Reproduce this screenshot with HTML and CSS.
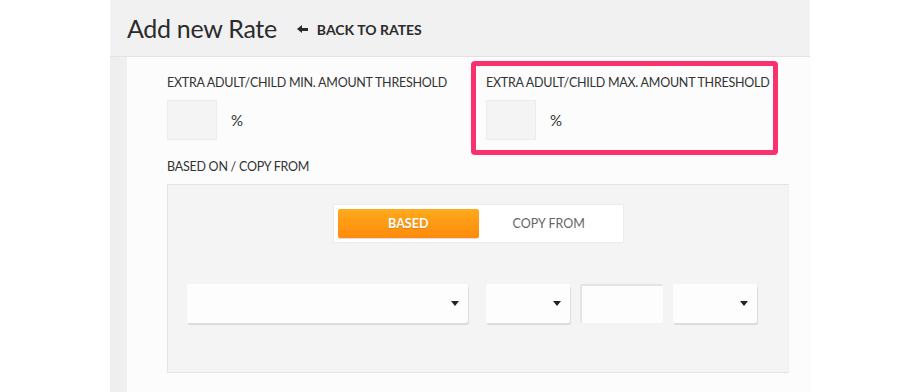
FILE: index.html
```html
<!DOCTYPE html>
<html>

<head>
    <meta charset="utf-8" />
    <title>Add new Rate</title>
    <link rel="stylesheet" href="styles.css">
</head>

<body>
    <div class="page">
        <div class="header">
            <h1>Add new Rate</h1>
            <a class="back-link" href="#"><span class="back-arrow"></span>BACK TO RATES</a>
        </div>
        <div class="main">
            <div class="strip"></div>
            <div class="content">
                <div class="threshold-row">
                    <div class="field">
                        <label>EXTRA ADULT/CHILD MIN. AMOUNT THRESHOLD</label>
                        <div class="percent-input">
                            <input type="text">
                            <span>%</span>
                        </div>
                    </div>
                    <div class="field highlight">
                        <label>EXTRA ADULT/CHILD MAX. AMOUNT THRESHOLD</label>
                        <div class="percent-input">
                            <input type="text">
                            <span>%</span>
                        </div>
                    </div>
                </div>

                <div class="section-title">BASED ON / COPY FROM</div>
                <div class="based-box">
                    <div class="toggle">
                        <button class="toggle-btn active">BASED</button>
                        <button class="toggle-btn">COPY FROM</button>
                    </div>
                    <div class="select-row">
                        <div class="select wide"><span class="caret"></span></div>
                        <div class="select small"><span class="caret"></span></div>
                        <div class="text-box"></div>
                        <div class="select small"><span class="caret"></span></div>
                    </div>
                </div>
            </div>
        </div>
    </div>
</body>

</html>
```

FILE: styles.css
```css
body {
    margin: 0;
    background: #fff;
    font-family: "Lato", "Liberation Sans", sans-serif;
    color: #333;
}

.page {
    margin-left: 110px;
    width: 700px;
    height: 392px;
    display: flex;
    flex-direction: column;
}

.header {
    height: 56px;
    background: #f1f1f1;
    border-bottom: 1px solid #e2e2e2;
    display: flex;
    align-items: center;
    padding-left: 17px;
}

.header h1 {
    margin: 0;
    font-size: 25px;
    letter-spacing: -0.3px;
    font-weight: normal;
    color: #2b2b2b;
}

.back-link {
    margin-left: 20px;
    display: flex;
    align-items: center;
    font-size: 14px;
    font-weight: bold;
    color: #2b2b2b;
    text-decoration: none;
    padding-top: 2px;
}

.back-arrow {
    position: relative;
    width: 7px;
    height: 3px;
    background: #2b2b2b;
    margin-left: 4px;
    margin-right: 9px;
}

.back-arrow::before {
    content: "";
    position: absolute;
    left: -4px;
    top: -3px;
    border-top: 4.5px solid transparent;
    border-bottom: 4.5px solid transparent;
    border-right: 5px solid #2b2b2b;
}

.main {
    flex: 1;
    display: flex;
}

.strip {
    width: 17px;
    background: #efefef;
}

.content {
    flex: 1;
    background: #fcfcfc;
    padding: 4px 0 0 25px;
}

.threshold-row {
    display: flex;
}

.field {
    border: 5px solid transparent;
    padding: 7px 10px 10px;
    width: 299px;
    box-sizing: border-box;
}

.field:first-child {
    width: 319px;
}

.field.highlight {
    width: 307px;
    border-color: #f9316d;
    border-radius: 4px;
}

.field label,
.section-title {
    display: block;
    font-size: 12.5px;
    letter-spacing: -0.25px;
    line-height: 20px;
    white-space: nowrap;
    color: #333;
}

.percent-input {
    display: flex;
    align-items: center;
    margin-top: 7px;
}

.percent-input input {
    width: 50px;
    height: 40px;
    box-sizing: border-box;
    border: 1px solid #ececec;
    background: #f4f4f4;
    margin: 0;
}

.percent-input span {
    margin-left: 14px;
    font-size: 15px;
    color: #333;
}

.section-title {
    margin: 2px 0 0 15px;
}

.based-box {
    margin: 7px 0 0 15px;
    width: 622px;
    height: 189px;
    box-sizing: border-box;
    background: #f4f4f4;
    border: 1px solid #e4e4e4;
    border-right-color: #f0f0f0;
    padding: 19px 0 0 19px;
}

.toggle {
    margin-left: 146px;
    width: 291px;
    height: 39px;
    box-sizing: border-box;
    background: #fff;
    border: 1px solid #ececec;
    padding: 4px;
    display: flex;
}

.toggle-btn {
    width: 141px;
    height: 29px;
    border: none;
    background: transparent;
    font-family: "Lato", "Liberation Sans", sans-serif;
    font-size: 12.5px;
    color: #666;
    padding: 0;
}

.toggle-btn.active {
    background: linear-gradient(#ffaa1c, #ff8a0c);
    color: #fff;
    font-weight: bold;
    border-radius: 2px;
    box-shadow: 0 1px 1px rgba(0, 0, 0, 0.15);
    text-shadow: 0 1px 1px rgba(0, 0, 0, 0.15);
}

.select-row {
    display: flex;
    margin-top: 41px;
}

.select,
.text-box {
    height: 39px;
    box-sizing: border-box;
    background: #fdfdfd;
    border-radius: 2px;
    position: relative;
}

.select {
    box-shadow: 1px 2px 0 #dcdcdc;
}

.select.wide {
    width: 281px;
    margin-right: 18px;
}

.select.small {
    width: 84px;
}

.text-box {
    width: 83px;
    margin: 0 10px;
    border-top: 2px solid #e4e4e4;
    border-left: 2px solid #e4e4e4;
}

.caret {
    position: absolute;
    right: 9px;
    top: 17px;
    width: 0;
    height: 0;
    border-left: 4px solid transparent;
    border-right: 4px solid transparent;
    border-top: 5px solid #222;
}
```
